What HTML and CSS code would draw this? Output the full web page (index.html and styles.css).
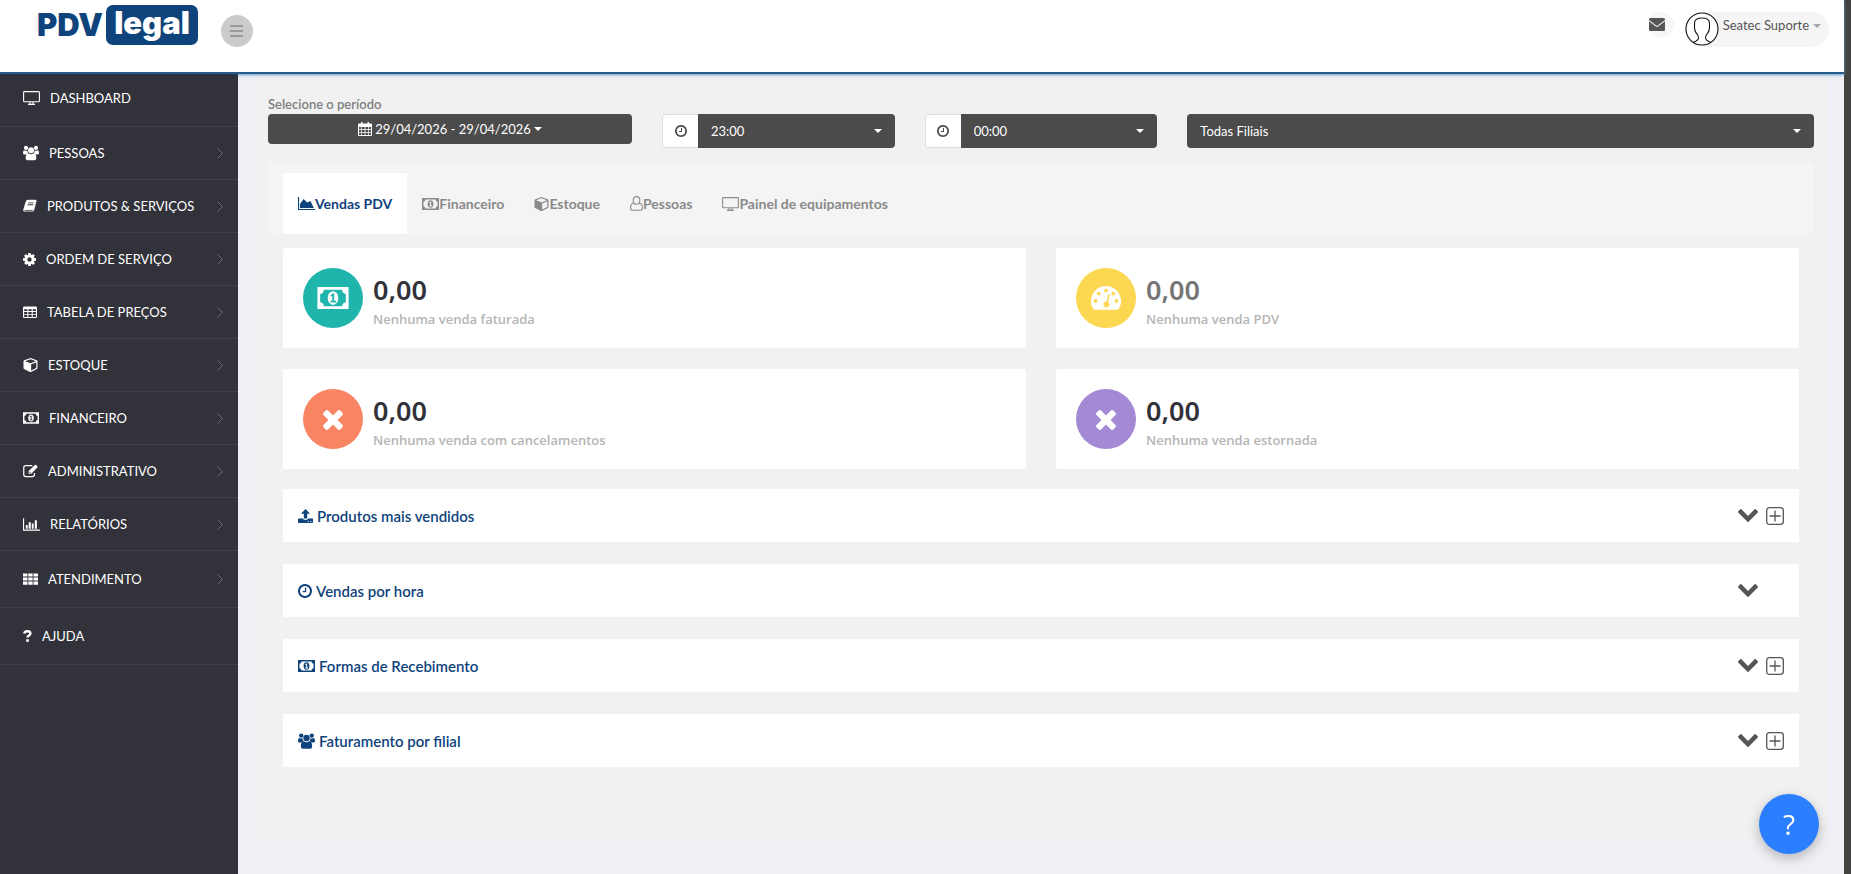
FILE: index.html
```html
<!DOCTYPE html>
<html lang="pt-BR">
<head>
  <meta charset="UTF-8">
  <meta name="viewport" content="width=device-width, initial-scale=1.0">
  <title>PDV Legal - Dashboard</title>
  <link rel="stylesheet" href="styles.css">
</head>
<body>
  <svg class="sprite" aria-hidden="true">
    <symbol id="i-monitor" viewBox="0 0 17 14"><path d="M1.5.6h14q.9 0 .9.9v8.4q0 .9-.9.9h-14q-.9 0-.9-.9V1.500q0-.9.9-.9zM7 11v2.200M10 11v2.200M5 13.400h7" fill="none" stroke="currentColor" stroke-width="1.100"/></symbol>
    <symbol id="i-users" viewBox="0 0 17 16"><circle cx="3.200" cy="2.600" r="2.200"/><circle cx="13.800" cy="2.600" r="2.200"/><circle cx="8.500" cy="5" r="3.200"/><path d="M0 8.500Q0 5 1.400 5q1.500 1 3.200.3-.1 1.800 1 3-1.300.1-2.100 1.200H1.400Q0 9.500 0 8.500zM17 8.500Q17 5 15.600 5q-1.500 1-3.200.3.100 1.800-1 3 1.300.1 2.100 1.200h2.100q1.400 0 1.400-1zM5.700 8.300q2.800 2 5.600 0 2.900.4 2.900 5.300 0 2.200-2.200 2.200H5q-2.200 0-2.200-2.200 0-4.900 2.900-5.300z"/></symbol>
    <symbol id="i-book" viewBox="0 0 15 14"><path fill-rule="evenodd" d="M5.200.3h8.100q1.500.1 1.200 1.700L12 11.600q-.5 1.400-1.900 1.400H2Q0 13 .2 11.200L3 2Q3.600.4 5.200.3zM1.300 10.800q.1 1.200 1.200 1.200h7.200q1 0 1.300-.8l2.500-8.700.2 0-2.400 8q-.3.800-1.300.8H2q-.7 0-.7-.5zM5.600 3.200l-.3.900h6l.3-.9zM5 5.200l-.3.900h6l.3-.9z"/></symbol>
    <symbol id="i-cog" viewBox="128 128 1536 1536"><path d="M1152 896q0-106-75-181t-181-75-181 75-75 181 75 181 181 75 181-75 75-181zm512-109v222q0 12-8 23t-20 13l-185 28q-19 54-39 91 35 50 107 138 10 12 10 25t-9 23q-27 37-99 108t-94 71q-12 0-26-9l-138-108q-44 23-91 38-16 136-29 186-7 28-36 28h-222q-14 0-24.500-8.500t-11.500-21.500l-28-184q-49-16-90-37l-141 107q-10 9-25 9-14 0-25-11-126-114-165-168-7-10-7-23 0-12 8-23 15-21 51-66.500t54-70.500q-27-50-41-99l-183-27q-13-2-21-12.500t-8-23.500v-222q0-12 8-23t19-13l186-28q14-46 39-92-40-57-107-138-10-12-10-24 0-10 9-23 26-36 98.500-107.500t94.500-71.500q13 0 26 10l138 107q44-23 91-38 16-136 29-186 7-28 36-28h222q14 0 24.500 8.500t11.500 21.500l28 184q49 16 90 37l142-107q9-9 24-9 13 0 25 10 129 119 165 170 7 8 7 22 0 12-8 23-15 21-51 66.500t-54 70.500q26 50 41 98l183 28q13 2 21 12.500t8 23.500z"/></symbol>
    <symbol id="i-table" viewBox="0 0 15 13"><path fill-rule="evenodd" d="M1.500 0h12Q15 0 15 1.500v9.500q0 1.500-1.500 1.500h-12Q0 12.500 0 11V1.500Q0 0 1.500 0zM1.200 3v2h3.400V3zM5.700 3v2h3.600V3zM10.400 3v2h3.400V3zM1.200 6v2h3.400V6zM5.700 6v2h3.600V6zM10.400 6v2h3.400V6zM1.200 9v2.300h3.400V9zM5.700 9v2.300h3.600V9zM10.400 9v2.300h3.400V9z"/></symbol>
    <symbol id="i-cube" viewBox="0 0 15 15"><path fill-rule="evenodd" d="M7.500 0l6.700 2.400q.8.300.8 1.100v7.300q0 .7-.6 1.100l-6.300 3q-.6.200-1.200 0l-6.300-3Q0 11.500 0 10.800V3.500q0-.8.800-1.100zM7.500 1.300L1.700 3.400l5.800 2.100 5.800-2.100zM8.200 6.700v6.700l5.500-2.700V4.700z"/></symbol>
    <symbol id="i-money" viewBox="0 0 34 24"><path fill-rule="evenodd" d="M0 0h34v24H0zM7 3q0 4-4 4.500v9q4 .5 4 4.500h20q0-4 4-4.500v-9q-4-.5-4-4.500z"/><ellipse cx="17" cy="12" rx="5.800" ry="7.500"/><path class="cut" d="M14 9.500l2.500-2.500h1.800v8h2v1.800h-6V15h2V9.500l-1.200 1z"/></symbol>
    <symbol id="i-edit" viewBox="0 0 16 14"><path d="M10 1.300H3Q.8 1.300.8 3.500v7.200q0 2.200 2.200 2.200h7q2.200 0 2.200-2.200V9" fill="none" stroke="currentColor" stroke-width="1.300"/><path d="M12.600.6q.7-.6 1.400 0l1.300 1.300q.6.7 0 1.400L8.800 9.800H6V7zM7 8v.9h1l.5-.5-1-1z" fill-rule="evenodd"/></symbol>
    <symbol id="i-bars" viewBox="0 0 18 13"><path d="M0 0h1.200v11.800H18V13H0zM3 7h2v4H3zM6 4h2.200v7H6zM9.300 5.500h2V11h-2zM12.500 2h2.200v9h-2.200z"/></symbol>
    <symbol id="i-grid" viewBox="0 0 16 12"><path d="M0 0h4.700v3.400H0zM5.600 0h4.700v3.400H5.600zM11.200 0H16v3.400h-4.800zM0 4.300h4.700v3.400H0zM5.600 4.300h4.700v3.400H5.600zM11.200 4.300H16v3.400h-4.800zM0 8.600h4.700V12H0zM5.600 8.600h4.700V12H5.600zM11.200 8.600H16V12h-4.800z"/></symbol>
    <symbol id="i-help" viewBox="0 0 9 12"><path d="M1.200 3.500Q1.800 1.300 4.400 1.300q3 0 3 2.200 0 1.300-1.600 2.100-1.300.7-1.300 1.900" fill="none" stroke="currentColor" stroke-width="2.400"/><path d="M3.200 9.200h2.600v2.600H3.200z"/></symbol>
    <symbol id="i-right" viewBox="0 0 6 11"><path d="M.5.500l5 5-5 5" fill="none" stroke="currentColor"/></symbol>
    <symbol id="i-calendar" viewBox="0 0 14 14"><path fill-rule="evenodd" d="M3 0h1.500v1.500h5V0H11v1.500h2q1 0 1 1V13q0 1-1 1H1q-1 0-1-1V2.500q0-1 1-1h2zM1 5v2h2.300V5zM4 5v2h2.600V5zM7.400 5v2H10V5zM10.700 5v2H13V5zM1 7.800v2.200h2.300V7.800zM4 7.800v2.200h2.600V7.800zM7.400 7.800v2.200H10V7.800zM10.700 7.800v2.200H13V7.800zM1 10.800V13h2.300v-2.200zM4 10.800V13h2.600v-2.200zM7.400 10.800V13H10v-2.200zM10.700 10.800V13H13v-2.200z"/></symbol>
    <symbol id="i-clock" viewBox="128 128 1536 1536"><path d="M1024 544v448q0 14-9 23t-23 9h-320q-14 0-23-9t-9-23v-64q0-14 9-23t23-9h224v-352q0-14 9-23t23-9h64q14 0 23 9t9 23zm416 352q0-148-73-273t-198-198-273-73-273 73-198 198-73 273 73 273 198 198 273 73 273-73 198-198 73-273zm224 0q0 209-103 385.500t-279.500 279.500-385.500 103-385.500-103-279.500-279.500-103-385.500 103-385.500 279.500-279.500 385.500-103 385.500 103 279.500 279.500 103 385.500z"/></symbol>
    <symbol id="i-area" viewBox="0 0 17 13"><path d="M0 0h1.100v11.900H17V13H0zM2 11V7l3.600-5 3.600 3.600L12.500 4l3.300 7z"/></symbol>
    <symbol id="i-person" viewBox="0 0 13 15"><path d="M6.500.6q3.300 0 3.300 3.700 0 4-3.300 4t-3.300-4Q3.200.6 6.500.6zM3.700 7Q.6 7.500.6 11.900q0 2.400 2.200 2.400h7.400q2.200 0 2.200-2.400 0-4.400-3.100-4.900" fill="none" stroke="currentColor" stroke-width="1.100"/></symbol>
    <symbol id="i-gauge" viewBox="0 0 30 24"><path fill-rule="evenodd" d="M15 0a15 15 0 0 1 12.800 22.800q-.5.900-1.600.9H3.800q-1.100 0-1.600-.9A15 15 0 0 1 15 0zM4.500 13a1.900 1.900 0 1 0 0 3.800 1.900 1.900 0 0 0 0-3.800zM7.700 5.700a1.900 1.900 0 1 0 0 3.800 1.900 1.900 0 0 0 0-3.800zM15 2.700a1.900 1.900 0 1 0 0 3.800 1.900 1.900 0 0 0 0-3.800zM22.300 5.700a1.900 1.900 0 1 0 0 3.800 1.900 1.900 0 0 0 0-3.800zM25.500 13a1.900 1.900 0 1 0 0 3.800 1.900 1.900 0 0 0 0-3.800zM17.200 8.400l-1.700 7a3 3 0 1 0 1.600.5l1.700-7q-.7-1.200-1.600-.5z"/></symbol>
    <symbol id="i-times" viewBox="302 302 1188 1252"><path d="M1490 1322q0 40-28 68l-136 136q-28 28-68 28t-68-28l-294-294-294 294q-28 28-68 28t-68-28l-136-136q-28-28-28-68t28-68l294-294-294-294q-28-28-28-68t28-68l136-136q28-28 68-28t68 28l294 294 294-294q28-28 68-28t68 28l136 136q28 28 28 68t-28 68l-294 294 294 294q28 28 28 68z"/></symbol>
    <symbol id="i-upload" viewBox="0 0 15 14"><path fill-rule="evenodd" d="M7.500 0L12 4.700H9.200v4.800H5.800V4.700H3zM.8 9.500h4q.5 1.400 2.700 1.400t2.700-1.400h4q.8 0 .8.800v2.900q0 .8-.8.800H.8q-.8 0-.8-.8v-2.900q0-.8.800-.8zM9.800 12v1h1v-1zM12.300 12v1h1v-1z"/></symbol>
    <symbol id="i-down" viewBox="90 533 1612 1035"><path d="M1683 808l-742 741q-19 19-45 19t-45-19l-742-741q-19-19-19-45.500t19-45.500l166-165q19-19 45-19t45 19l531 531 531-531q19-19 45-19t45 19l166 165q19 19 19 45.500t-19 45.500z"/></symbol>
    <symbol id="i-plus" viewBox="0 0 18 18"><path d="M3.500.7h11q2.800 0 2.800 2.800v11q0 2.800-2.800 2.800h-11Q.7 17.300.7 14.500v-11Q.7.700 3.500.7zM9 3.500v11M3.500 9h11" fill="none" stroke="currentColor" stroke-width="1.300"/></symbol>
    <symbol id="i-mail" viewBox="0 0 16 13"><path d="M1.500 0h13Q16 0 16 1.500v.4L8.700 7.400q-.7.500-1.400 0L0 1.900v-.4Q0 0 1.500 0zM0 3.300l6.600 5q1.400 1 2.800 0l6.600-5v8.200q0 1.500-1.500 1.500h-13Q0 13 0 11.500z"/></symbol>
    <symbol id="i-avatar" viewBox="0 0 34 34"><g fill="none" stroke="#111" stroke-width="1.100"><circle cx="17" cy="17" r="16" fill="#fff"/><path d="M8.300 30.200q5-1.600 5.200-4.500.1-2-2.200-4.500-1.800-2.400-1.800-6v-4Q9.500 6 17 6t7.500 5.200v4q0 3.600-1.800 6-2.300 2.500-2.200 4.500.2 2.900 5.200 4.500"/></g></symbol>
  </svg>

  <div class="app">
    <header class="topbar">
      <a class="logo" href="#" aria-label="PDV legal"><span>PDV</span><span class="logo-box">legal</span></a>
      <button class="menu-toggle" aria-label="Menu"><i></i><i></i><i></i></button>
      <div class="topbar-right">
        <button class="mail" aria-label="Mensagens"><svg width="16" height="13"><use href="#i-mail"/></svg></button>
        <button class="user"><svg width="34" height="34"><use href="#i-avatar"/></svg><span>Seatec Suporte</span><b class="caret"></b></button>
      </div>
    </header>

    <div class="layout">
      <nav class="sidebar">
        <a class="first" href="#"><svg width="17" height="14"><use href="#i-monitor"/></svg>DASHBOARD</a>
        <a href="#"><svg width="16" height="16"><use href="#i-users"/></svg>PESSOAS<svg class="arrow" width="6" height="11"><use href="#i-right"/></svg></a>
        <a href="#"><svg width="14" height="14"><use href="#i-book"/></svg>PRODUTOS &amp; SERVIÇOS<svg class="arrow" width="6" height="11"><use href="#i-right"/></svg></a>
        <a href="#"><svg width="13" height="13"><use href="#i-cog"/></svg>ORDEM DE SERVIÇO<svg class="arrow" width="6" height="11"><use href="#i-right"/></svg></a>
        <a href="#"><svg width="14" height="13"><use href="#i-table"/></svg>TABELA DE PREÇOS<svg class="arrow" width="6" height="11"><use href="#i-right"/></svg></a>
        <a href="#"><svg width="15" height="14"><use href="#i-cube"/></svg>ESTOQUE<svg class="arrow" width="6" height="11"><use href="#i-right"/></svg></a>
        <a href="#"><svg width="16" height="12"><use href="#i-money"/></svg>FINANCEIRO<svg class="arrow" width="6" height="11"><use href="#i-right"/></svg></a>
        <a href="#"><svg width="15" height="14"><use href="#i-edit"/></svg>ADMINISTRATIVO<svg class="arrow" width="6" height="11"><use href="#i-right"/></svg></a>
        <a href="#"><svg width="17" height="13"><use href="#i-bars"/></svg>RELATÓRIOS<svg class="arrow" width="6" height="11"><use href="#i-right"/></svg></a>
        <a class="tall" href="#"><svg width="15" height="12"><use href="#i-grid"/></svg>ATENDIMENTO<svg class="arrow" width="6" height="11"><use href="#i-right"/></svg></a>
        <a class="tall" href="#"><svg width="9" height="12"><use href="#i-help"/></svg>AJUDA</a>
      </nav>

      <main>
        <div class="panel">
          <label class="period-label" for="periodo">Selecione o período</label>
          <div class="filters">
            <button id="periodo" class="period"><svg width="14" height="14"><use href="#i-calendar"/></svg>29/04/2026 - 29/04/2026<b class="caret"></b></button>
            <div class="group">
              <span class="addon"><svg width="12" height="12"><use href="#i-clock"/></svg></span>
              <div class="select"><select aria-label="Hora inicial"><option>23:00</option></select></div>
            </div>
            <div class="group">
              <span class="addon"><svg width="12" height="12"><use href="#i-clock"/></svg></span>
              <div class="select"><select aria-label="Hora final"><option>00:00</option></select></div>
            </div>
            <div class="group filial">
              <div class="select"><select aria-label="Filial"><option>Todas Filiais</option></select></div>
            </div>
          </div>

          <div class="tabs">
            <a class="active" href="#"><svg width="17" height="13"><use href="#i-area"/></svg>Vendas PDV</a>
            <a href="#"><svg width="17" height="12"><use href="#i-money"/></svg>Financeiro</a>
            <a href="#"><svg width="15" height="14"><use href="#i-cube"/></svg>Estoque</a>
            <a href="#"><svg width="13" height="15"><use href="#i-person"/></svg>Pessoas</a>
            <a href="#"><svg width="17" height="14"><use href="#i-monitor"/></svg>Painel de equipamentos</a>
          </div>

          <div class="content">
            <div class="cards">
              <div class="card">
                <span class="circle teal"><svg width="34" height="22"><use href="#i-money"/></svg></span>
                <div><h3>0,00</h3><p>Nenhuma venda faturada</p></div>
              </div>
              <div class="card">
                <span class="circle yellow"><svg width="30" height="24"><use href="#i-gauge"/></svg></span>
                <div><h3 class="muted">0,00</h3><p>Nenhuma venda PDV</p></div>
              </div>
              <div class="card">
                <span class="circle orange"><svg width="20" height="21"><use href="#i-times"/></svg></span>
                <div><h3>0,00</h3><p>Nenhuma venda com cancelamentos</p></div>
              </div>
              <div class="card">
                <span class="circle purple"><svg width="20" height="21"><use href="#i-times"/></svg></span>
                <div><h3>0,00</h3><p>Nenhuma venda estornada</p></div>
              </div>
            </div>

            <section class="box">
              <h4><svg width="15" height="14"><use href="#i-upload"/></svg>Produtos mais vendidos</h4>
              <button aria-label="Expandir"><svg width="20" height="13"><use href="#i-down"/></svg></button>
              <button class="plus" aria-label="Adicionar"><svg width="18" height="18"><use href="#i-plus"/></svg></button>
            </section>
            <section class="box">
              <h4><svg width="14" height="14"><use href="#i-clock"/></svg>Vendas por hora</h4>
              <button aria-label="Expandir"><svg width="20" height="13"><use href="#i-down"/></svg></button>
              <span class="plus"></span>
            </section>
            <section class="box">
              <h4><svg width="17" height="12"><use href="#i-money"/></svg>Formas de Recebimento</h4>
              <button aria-label="Expandir"><svg width="20" height="13"><use href="#i-down"/></svg></button>
              <button class="plus" aria-label="Adicionar"><svg width="18" height="18"><use href="#i-plus"/></svg></button>
            </section>
            <section class="box">
              <h4><svg width="17" height="16"><use href="#i-users"/></svg>Faturamento por filial</h4>
              <button aria-label="Expandir"><svg width="20" height="13"><use href="#i-down"/></svg></button>
              <button class="plus" aria-label="Adicionar"><svg width="18" height="18"><use href="#i-plus"/></svg></button>
            </section>
          </div>
        </div>
      </main>
    </div>
  </div>
  <div class="scrollbar"></div>
  <button class="help" aria-label="Ajuda">?</button>
</body>
</html>
```
FILE: styles.css
```css
* {
  box-sizing: border-box;
}
body {
  margin: 0;
  display: flex;
  min-height: 100vh;
  font-family: Lato, "Open Sans", sans-serif;
  font-size: 13px;
  background: #eff0f6;
  color: #4b4b4b;
}
a {
  color: inherit;
  text-decoration: none;
}
button {
  border: 0;
  padding: 0;
  background: none;
  color: inherit;
  font: inherit;
  cursor: pointer;
}
h3, h4, p {
  margin: 0;
}
svg {
  display: block;
  flex: none;
  fill: currentColor;
}
.sprite {
  position: absolute;
  width: 0;
  height: 0;
}
.cut {
  fill: var(--cut, #fff);
}
.caret {
  border: 4px solid transparent;
  border-top-color: currentColor;
  border-bottom: 0;
}
.app {
  flex: 1;
  display: flex;
  flex-direction: column;
}
.scrollbar {
  width: 7px;
  background: #424240;
}

/* topo */
.topbar {
  z-index: 1;
  display: flex;
  align-items: flex-start;
  height: 74px;
  padding: 5px 15px 0 37px;
  background: #fff;
  border-bottom: 2px solid #2a5a86;
  box-shadow: 0 1px 3px #5f9bd0;
}
.logo {
  display: flex;
  align-items: center;
  gap: 3px;
  color: #0f437c;
  font-family: Inter, sans-serif;
  font-size: 31px;
  line-height: 36px;
  font-weight: 900;
}
.logo-box {
  width: 92px;
  height: 40px;
  border-radius: 7px;
  background: #0f437c;
  color: #fff;
  text-align: center;
}
.menu-toggle {
  display: flex;
  flex-direction: column;
  align-items: center;
  justify-content: center;
  gap: 3px;
  width: 32px;
  height: 32px;
  margin: 10px 0 0 23px;
  border-radius: 50%;
  background: #cbcbcb;
}
.menu-toggle i {
  width: 13px;
  height: 2px;
  background: #999;
}
.topbar-right {
  display: flex;
  gap: 11px;
  margin: 7px 0 0 auto;
}
.mail {
  width: 25px;
  height: 25px;
  border-radius: 50%;
  background: #f6f6f6;
  color: #555;
}
.user {
  display: flex;
  gap: 4px;
  height: 35px;
  padding-right: 8px;
  border-radius: 18px;
  background: #f5f5f5;
  color: #555;
  line-height: 27px;
}
.user .caret {
  margin-top: 12px;
  color: #a5a5b0;
}

/* menu lateral */
.layout {
  flex: 1;
  display: flex;
}
.sidebar {
  z-index: 1;
  width: 238px;
  background: #32323a;
  color: #fff;
  --cut: #32323a;
}
.sidebar a {
  display: flex;
  align-items: center;
  gap: 10px;
  height: 53px;
  padding: 0 15px 0 23px;
  border-bottom: 1px solid #40404a;
}
.sidebar .first {
  padding-bottom: 6px;
  border-top: 1px solid #1d3b57;
}
.sidebar .tall {
  height: 57px;
}
.sidebar .arrow {
  margin-left: auto;
  color: #6a6a73;
}

/* painel */
main {
  flex: 1;
  padding: 0 16px 36px;
}
.panel {
  height: 100%;
  padding: 20px 14px;
  background: #f1f1f1;
}
.period-label {
  display: block;
  line-height: 20px;
  font-weight: 600;
  color: #808080;
}
.filters {
  display: grid;
  grid-template-columns: repeat(12, 1fr);
  gap: 0 30px;
  align-items: start;
}
.filters > * {
  grid-column: span 2;
}
.filters .period {
  grid-column: span 3;
  display: flex;
  align-items: center;
  justify-content: center;
  gap: 3px;
  height: 30px;
  border-radius: 4px;
  background: #4b4b4b;
  color: #fff;
}
.filters .filial {
  grid-column: span 5;
}
.group {
  display: flex;
  height: 34px;
  border-radius: 4px;
  overflow: hidden;
}
.addon {
  display: flex;
  align-items: center;
  justify-content: center;
  width: 36px;
  background: #fff;
  border: 1px solid #ddd;
  border-right: 0;
  border-radius: 4px 0 0 4px;
}
.select {
  position: relative;
  flex: 1;
}
.select select {
  width: 100%;
  height: 34px;
  padding: 0 13px;
  border: 0;
  appearance: none;
  background: #4b4b4b;
  color: #fff;
  font: inherit;
}
.select::after {
  content: "";
  position: absolute;
  right: 13px;
  top: 15px;
  border: 4px solid transparent;
  border-top-color: #fff;
  border-bottom: 0;
  pointer-events: none;
}
.tabs {
  display: flex;
  margin-top: 14px;
  padding: 11px 15px 0;
  border-radius: 5px 5px 0 0;
  background: #f4f4f4;
  color: #8a8a8a;
  font-size: 14px;
  font-weight: 700;
  --cut: #f4f4f4;
}
.tabs a {
  display: flex;
  align-items: center;
  height: 61px;
  padding: 0 15px;
}
.tabs .active {
  background: #fff;
  color: #0f437c;
}
.content {
  padding: 14px 15px 0;
}
.cards {
  display: grid;
  grid-template-columns: 1fr 1fr;
  gap: 21px 30px;
  margin-bottom: 20px;
}
.card {
  display: flex;
  gap: 10px;
  padding: 20px 20px 18px;
  border-radius: 2px;
  background: #fff;
}
.circle {
  display: flex;
  align-items: center;
  justify-content: center;
  width: 60px;
  height: 60px;
  border-radius: 50%;
  color: #fff;
}
.teal {
  background: #20b5ac;
  --cut: #20b5ac;
}
.yellow {
  background: #fcd752;
}
.orange {
  background: #fa8564;
}
.purple {
  background: #a48ad4;
}
.card h3 {
  margin-top: 4px;
  font: 600 27px/36px "Noto Sans", sans-serif;
  color: #32323a;
}
.card h3.muted {
  color: #767676;
}
.card p {
  font: 600 13px/22px "Open Sans", sans-serif;
  color: #b5b5b5;
}
.box {
  display: flex;
  align-items: center;
  height: 53px;
  margin-bottom: 22px;
  padding: 0 15px;
  background: #fff;
}
.box h4 {
  display: flex;
  align-items: center;
  gap: 4px;
  margin-right: auto;
  font-size: 15px;
  font-weight: 600;
  color: #0f437c;
}
.box button {
  color: #555;
}
.box .plus {
  width: 18px;
  margin-left: 8px;
}

/* ajuda flutuante */
.help {
  position: fixed;
  right: 32px;
  bottom: 20px;
  width: 60px;
  height: 60px;
  border-radius: 50%;
  background: #2b7fff;
  box-shadow: 0 4px 12px rgba(0, 0, 0, 0.25);
  color: #fff;
  font: 28px "Open Sans", sans-serif;
}
```
